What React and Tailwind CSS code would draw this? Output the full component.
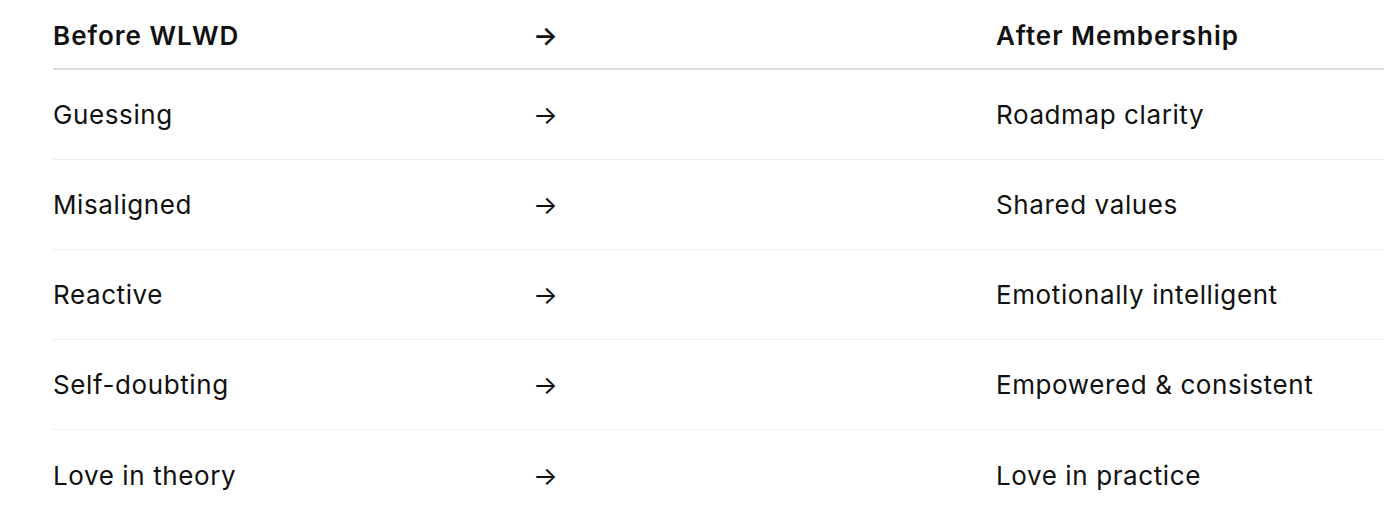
import React from 'react';

const rows = [
  ['Guessing', 'Roadmap clarity'],
  ['Misaligned', 'Shared values'],
  ['Reactive', 'Emotionally intelligent'],
  ['Self-doubting', 'Empowered & consistent'],
  ['Love in theory', 'Love in practice'],
];

const cols = 'grid grid-cols-[480px_463px_1fr] items-center';

export default function App() {
  return (
    <div className="min-h-[522px] bg-white pl-[53px] text-[#111111] font-['Inter','Noto_Sans',sans-serif] text-[26px] overflow-hidden">
      <div className="w-[1400px]">
        <div className={`${cols} h-[70px] pt-[2px] border-b-2 border-[#dadada] font-semibold tracking-[1px]`}>
          <div>Before WLWD</div>
          <div className="tracking-normal">→</div>
          <div>After Membership</div>
        </div>
        {rows.map(([before, after], i) => (
          <div
            key={before}
            className={`${cols} h-[90px] tracking-[0.6px] ${i < rows.length - 1 ? 'border-b border-[#eeeeee]' : ''}`}
          >
            <div>{before}</div>
            <div className="tracking-normal">→</div>
            <div>{after}</div>
          </div>
        ))}
      </div>
    </div>
  );
}
